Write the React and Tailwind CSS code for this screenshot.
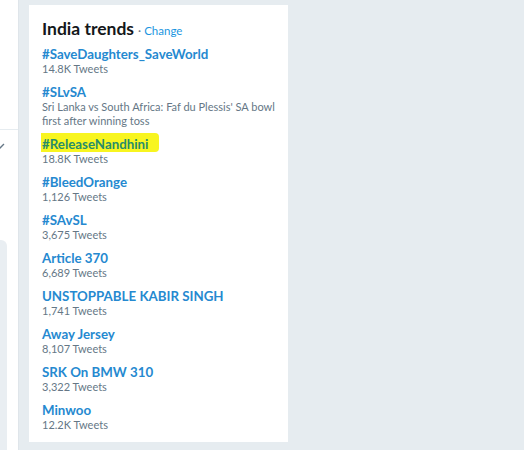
import React from "react";

const trends = [
  { name: "#SaveDaughters_SaveWorld", sub: ["14.8K Tweets"] },
  { name: "#SLvSA", sub: ["Sri Lanka vs South Africa: Faf du Plessis' SA bowl", "first after winning toss"] },
  { name: "#ReleaseNandhini", sub: ["18.8K Tweets"], hl: true },
  { name: "#BleedOrange", sub: ["1,126 Tweets"] },
  { name: "#SAvSL", sub: ["3,675 Tweets"] },
  { name: "Article 370", sub: ["6,689 Tweets"] },
  { name: "UNSTOPPABLE KABIR SINGH", sub: ["1,741 Tweets"] },
  { name: "Away Jersey", sub: ["8,107 Tweets"] },
  { name: "SRK On BMW 310", sub: ["3,322 Tweets"] },
  { name: "Minwoo", sub: ["12.2K Tweets"] },
];

export default function App() {
  return (
    <div
      className="w-[524px] h-[450px] bg-[#e6ecf0] flex overflow-hidden"
      style={{ fontFamily: 'Lato, "Noto Sans", Arial, sans-serif' }}
    >
      {/* left sliver of previous column */}
      <div className="w-[18px] h-full flex flex-col bg-white">
        <div className="h-[130px] border-b border-[#e6ecf0]"></div>
        <div className="h-[110px] pt-[12px]">
          <svg width="8" height="10" viewBox="0 0 8 10" className="-ml-[2px]">
            <path d="M1 7 L6 2" stroke="#657786" strokeWidth="1.3" fill="none" />
          </svg>
        </div>
        <div className="flex-1 w-[7px] bg-[#e9eef2] rounded-tr-[6px]"></div>
      </div>
      <div className="w-[11px] border-l border-[#dfe5ea]"></div>
      {/* trends card */}
      <div className="w-[259px] mt-[5px] h-[437px] bg-white pl-[13px] pt-[13px]">
        <div className="flex items-baseline h-[22px]">
          <span className="text-[17.5px] font-bold text-[#14171a] leading-[22px]">India trends</span>
          <span className="text-[12px] text-[#657786] ml-[4px]">·</span>
          <span className="text-[11.5px] text-[#1b95e0] ml-[3px]">Change</span>
        </div>
        <div className="flex flex-col mt-[6px]">
          {trends.map((t, i) => (
            <div key={i} className="flex flex-col mb-[8px]">
              {t.hl ? (
                <span className="self-start text-[13.3px] font-bold leading-[16px] text-[#278c6a] bg-[#f8f520] -ml-[1px] pl-[1px] pr-[11px] -mt-[3px] pt-[3px] rounded-r-[4px]">
                  {t.name}
                </span>
              ) : (
                <span className="text-[13.3px] font-bold leading-[16px] text-[#2589d0]">{t.name}</span>
              )}
              {t.sub.map((s, j) => (
                <span key={j} className="text-[11px] leading-[14px] text-[#657786] whitespace-nowrap">{s}</span>
              ))}
            </div>
          ))}
        </div>
      </div>
    </div>
  );
}
